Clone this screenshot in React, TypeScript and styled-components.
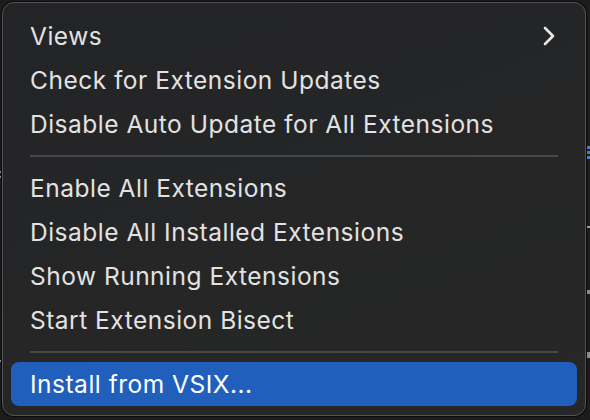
import React from "react";
import styled, { createGlobalStyle } from "styled-components";

const Global = createGlobalStyle`
  html, body { margin: 0; padding: 0; background: #1c1c1d; }
  body { width: 590px; height: 420px; overflow: hidden; font-family: Inter, "Noto Sans", sans-serif; }
`;

const Stage = styled.div`
  position: relative;
  width: 590px;
  height: 420px;
  padding: 2px;
  box-sizing: border-box;
  display: flex;
`;

const Peek = styled.div<{ $color: string }>`
  position: absolute;
  background: ${(p) => p.$color};
  width: 3px;
`;

const Menu = styled.div`
  position: relative;
  width: 584px;
  height: 414px;
  box-sizing: border-box;
  border-radius: 12px;
  background: linear-gradient(160deg, #232426 0%, #272727 100%);
  border: 1px solid #545456;
  box-shadow: 0 0 0 1px #0a0a0a;
  padding: 11px 8px 7px 8px;
  display: flex;
  flex-direction: column;
`;

const Row = styled.div<{ $active?: boolean }>`
  box-sizing: border-box;
  height: 44px;
  flex: none;
  display: flex;
  align-items: center;
  justify-content: space-between;
  padding: 0 20px 1px 19px;
  border-radius: 8px;
  font-size: 24.5px;
  letter-spacing: 0.5px;
  color: ${(p) => (p.$active ? "#ffffff" : "#e2e2e2")};
  background: ${(p) => (p.$active ? "#215fbd" : "transparent")};
`;

const Separator = styled.div`
  height: 2px;
  margin: 9px 19px 9px 19px;
  background: #48484a;
  flex: none;
`;

const Chevron = () => (
  <svg width="14" height="22" viewBox="0 0 14 22" style={{ marginRight: 1 }}>
    <path d="M3 3 L11 11 L3 19" fill="none" stroke="#e6e6e6" strokeWidth="2.6" strokeLinecap="round" strokeLinejoin="round" />
  </svg>
);

export default function App() {
  return (
    <Stage>
      <Global />
      <Peek $color="#3d7fd0" style={{ left: 587, top: 146, height: 3 }} />
      <Peek $color="#3d7fd0" style={{ left: 587, top: 151, height: 3 }} />
      <Peek $color="#3d7fd0" style={{ left: 587, top: 156, height: 3 }} />
      <Peek $color="#9a9a9a" style={{ left: 587, top: 226, height: 2 }} />
      <Peek $color="#8a8a8a" style={{ left: 587, top: 290, height: 4 }} />
      <Peek $color="#8a8a8a" style={{ left: 587, top: 352, height: 6 }} />
      <Peek $color="#8a8a8a" style={{ left: 0, top: 171, height: 2, width: 2 }} />
      <Peek $color="#8a8a8a" style={{ left: 0, top: 176, height: 2, width: 2 }} />
      <Peek $color="#8a8a8a" style={{ left: 0, top: 360, height: 2, width: 2 }} />
      <Menu>
        <Row>
          <span>Views</span>
          <Chevron />
        </Row>
        <Row>Check for Extension Updates</Row>
        <Row>Disable Auto Update for All Extensions</Row>
        <Separator />
        <Row>Enable All Extensions</Row>
        <Row>Disable All Installed Extensions</Row>
        <Row>Show Running Extensions</Row>
        <Row>Start Extension Bisect</Row>
        <Separator />
        <Row $active>Install from VSIX...</Row>
      </Menu>
    </Stage>
  );
}
